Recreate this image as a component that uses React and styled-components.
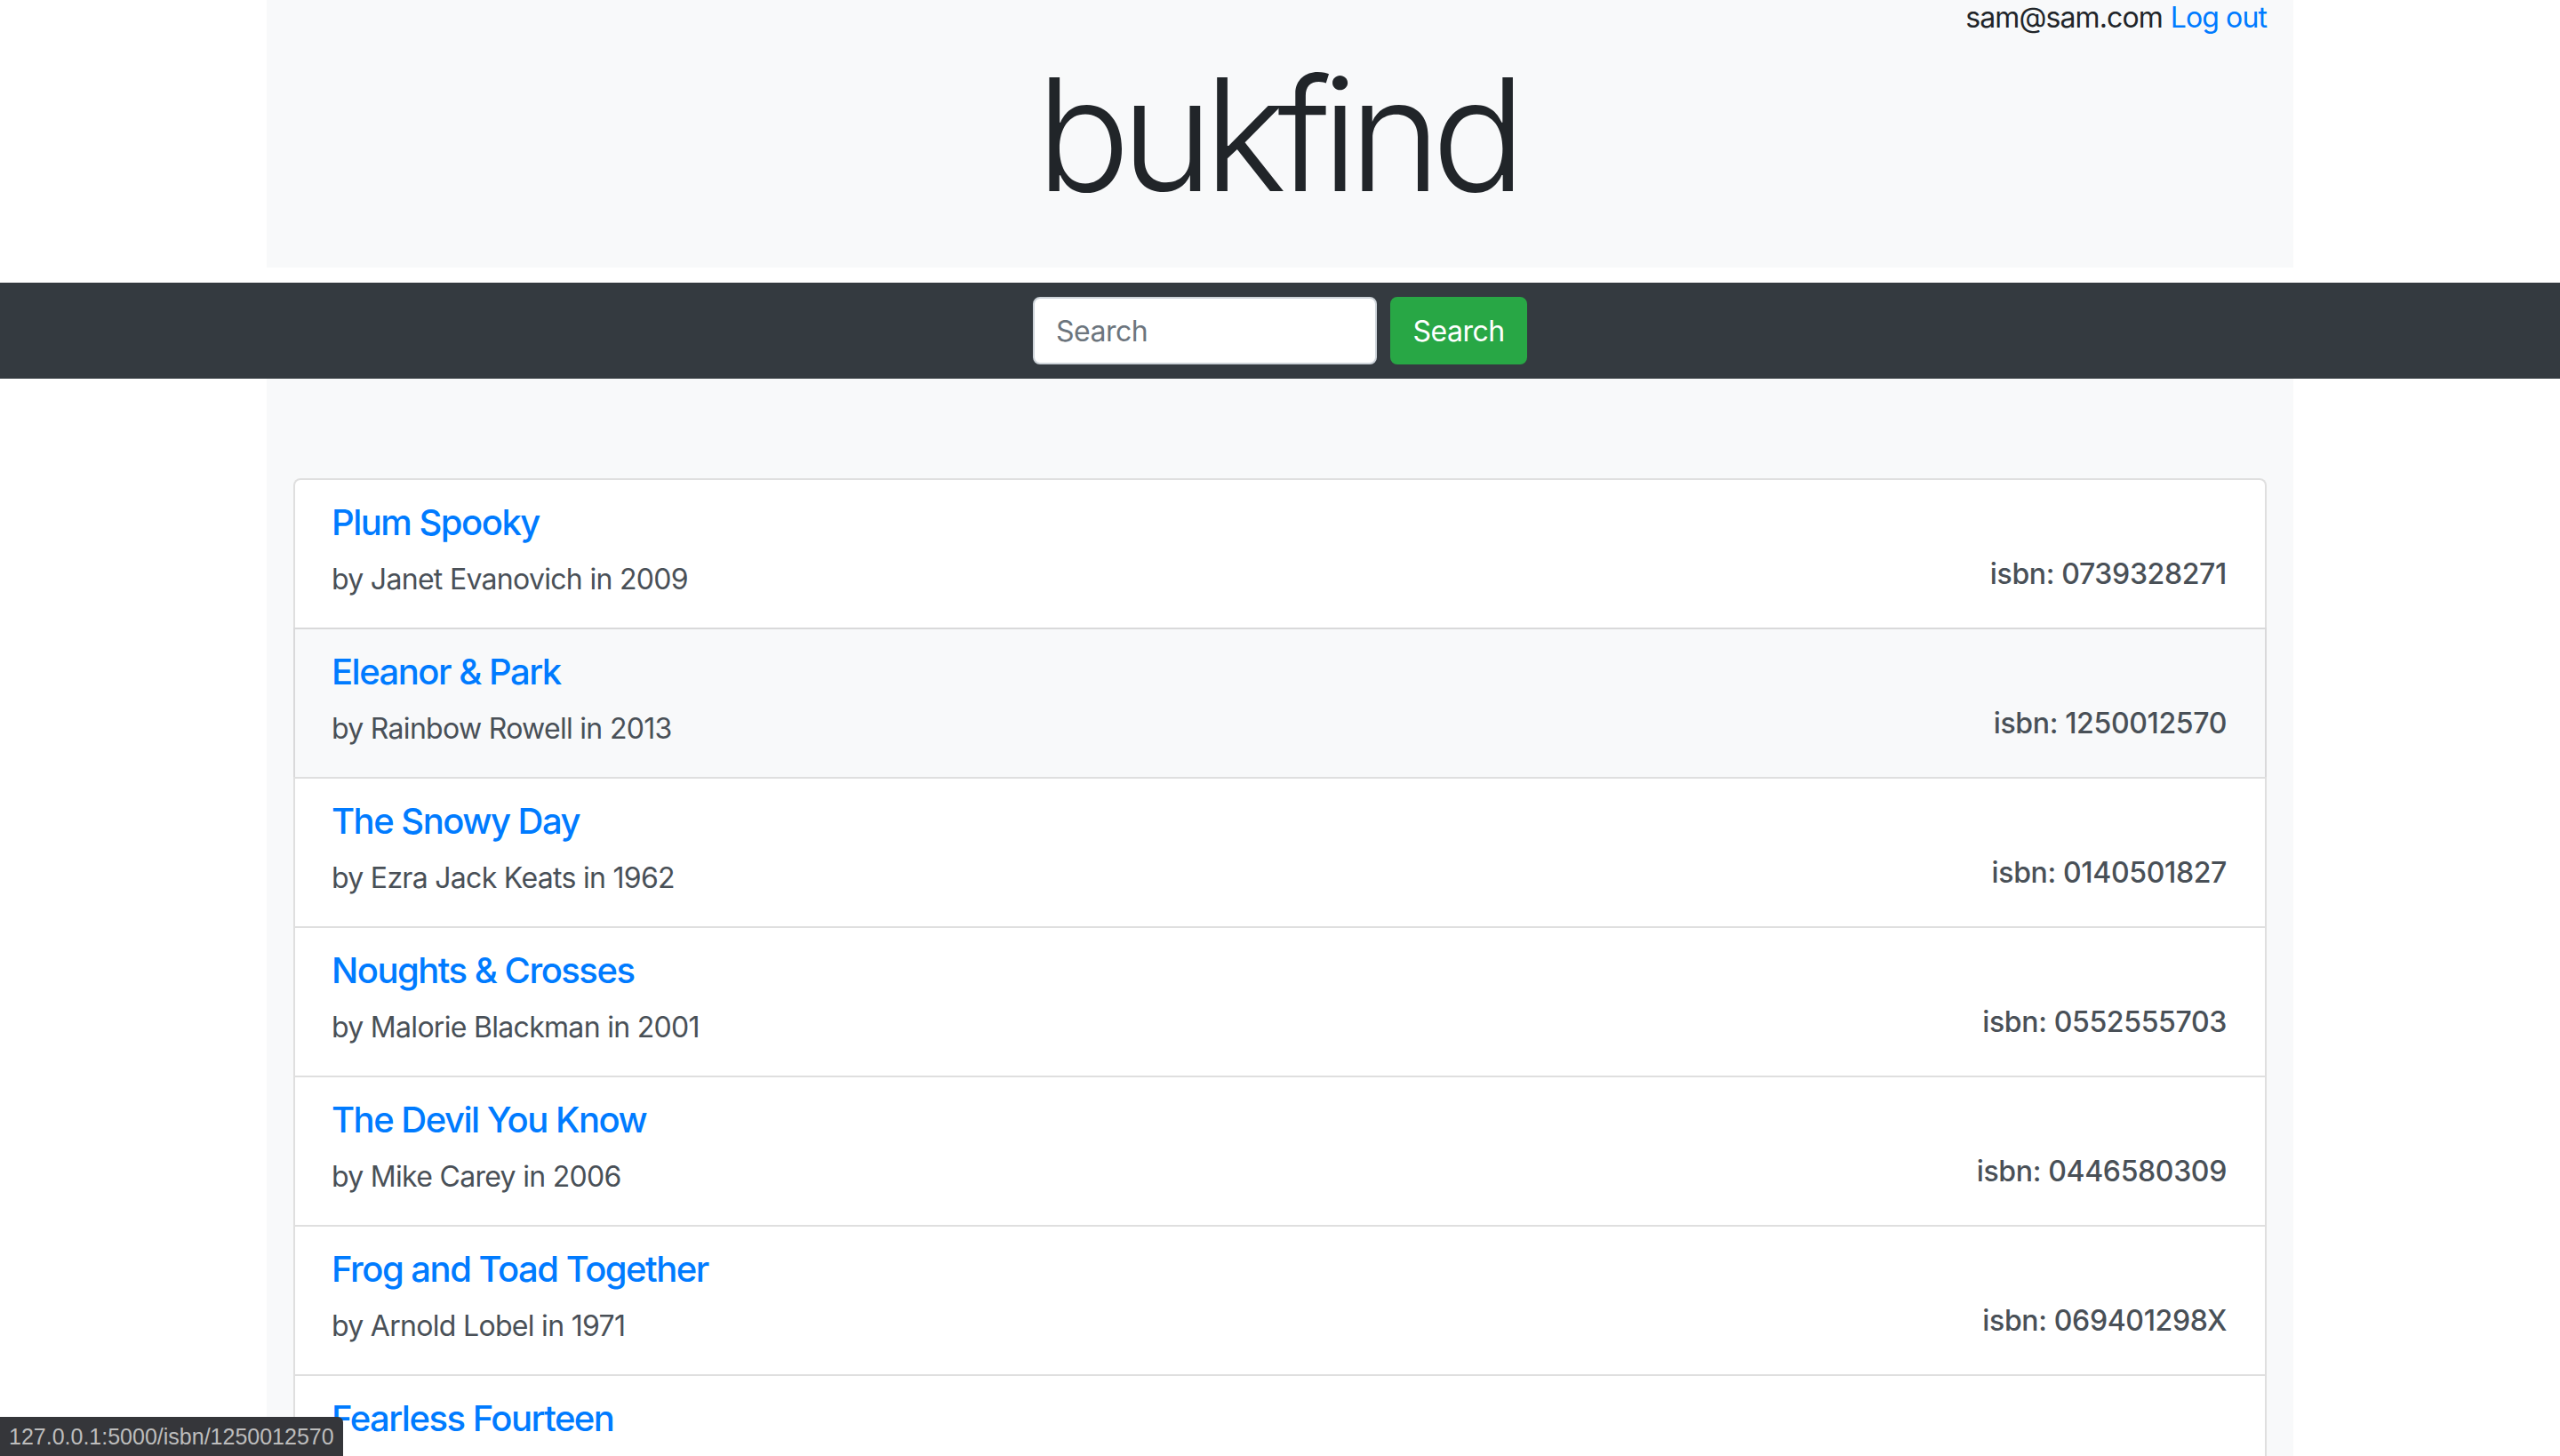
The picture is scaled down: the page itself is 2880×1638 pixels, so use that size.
import React from 'react';
import styled, { createGlobalStyle } from 'styled-components';

const GlobalStyle = createGlobalStyle`
  html, body { margin: 0; padding: 0; background: #fff; }
  body {
    font-family: Inter, "Noto Sans", sans-serif;
    color: #212529;
    font-size: 32px;
    line-height: 1.5;
  }
  *, *::before, *::after { box-sizing: border-box; }
`;

const HeaderBox = styled.header`
  width: 2280px;
  height: 301px;
  margin: 0 auto;
  padding: 0 30px;
  background: #f8f9fa;
  display: flex;
  flex-direction: column;
`;

const UserBar = styled.div`
  display: flex;
  justify-content: flex-end;
  gap: 9px;
  font-size: 32px;
  line-height: 40px;
  letter-spacing: -0.9px;
`;

const Email = styled.span`
  color: #212529;
`;

const Link = styled.a`
  color: #007bff;
  text-decoration: none;
`;

const Title = styled.h1`
  margin: 5px 0 0;
  padding-right: 8px;
  font-size: 176px;
  font-weight: 300;
  line-height: 211px;
  text-align: center;
  letter-spacing: -10.5px;
  color: #212529;
`;

const Navbar = styled.nav`
  margin-top: 17px;
  height: 108px;
  background: #343a40;
  display: flex;
  justify-content: center;
  align-items: center;
  gap: 15px;
`;

const SearchInput = styled.input`
  width: 387px;
  height: 76px;
  padding: 0 24px;
  font-family: inherit;
  font-size: 32px;
  letter-spacing: -0.5px;
  color: #495057;
  background: #fff;
  border: 2px solid #ced4da;
  border-radius: 8px;
  outline: none;
  &::placeholder { color: #6c757d; }
`;

const SearchButton = styled.button`
  width: 154px;
  height: 76px;
  font-family: inherit;
  font-size: 32px;
  letter-spacing: -0.5px;
  color: #fff;
  background: #28a745;
  border: 2px solid #28a745;
  border-radius: 8px;
  padding: 0;
`;

const Main = styled.main`
  width: 2280px;
  min-height: 1300px;
  margin: 0 auto;
  padding: 112px 30px 0;
  background: #f8f9fa;
`;

const List = styled.div`
  display: flex;
  flex-direction: column;
  border-radius: 8px;
  background: #fff;
`;

const Item = styled.a`
  display: flex;
  justify-content: space-between;
  align-items: flex-end;
  padding: 24px 43px 24px 41px;
  height: 170px;
  border: 2px solid rgba(0, 0, 0, 0.125);
  background: ${p => (p.$hovered ? '#f8f9fa' : '#fff')};
  text-decoration: none;
  & + & { margin-top: -2px; }
  &:first-child { border-top-left-radius: 8px; border-top-right-radius: 8px; }
`;

const Info = styled.div`
  display: flex;
  flex-direction: column;
`;

const BookTitle = styled.h5`
  margin: 0 0 16px;
  font-size: 40px;
  font-weight: 500;
  line-height: 48px;
  letter-spacing: -1.5px;
  color: #007bff;
`;

const Byline = styled.p`
  margin: 0 0 6px;
  font-size: 32px;
  line-height: 48px;
  letter-spacing: -0.7px;
  color: #495057;
`;

const Isbn = styled.h6`
  margin: 0 0 17px;
  font-size: 32px;
  font-weight: 500;
  line-height: 38px;
  letter-spacing: -0.35px;
  color: #495057;
`;

const StatusBar = styled.div`
  position: fixed;
  left: 0;
  bottom: 0;
  height: 44px;
  padding: 0 10px;
  background: #35363a;
  color: #bdbdbd;
  font-family: "Liberation Sans", Arial, sans-serif;
  font-size: 25px;
  line-height: 44px;
  border-top-right-radius: 6px;
`;

const books = [
  { title: 'Plum Spooky', author: 'Janet Evanovich', year: 2009, isbn: '0739328271' },
  { title: 'Eleanor & Park', author: 'Rainbow Rowell', year: 2013, isbn: '1250012570', hovered: true },
  { title: 'The Snowy Day', author: 'Ezra Jack Keats', year: 1962, isbn: '0140501827' },
  { title: 'Noughts & Crosses', author: 'Malorie Blackman', year: 2001, isbn: '0552555703' },
  { title: 'The Devil You Know', author: 'Mike Carey', year: 2006, isbn: '0446580309' },
  { title: 'Frog and Toad Together', author: 'Arnold Lobel', year: 1971, isbn: '069401298X' },
  { title: 'Fearless Fourteen', author: 'Janet Evanovich', year: 2008, isbn: '0312349513' },
];

export default function App() {
  return (
    <>
      <GlobalStyle />
      <HeaderBox>
        <UserBar>
          <Email>sam@sam.com</Email>
          <Link href="#">Log out</Link>
        </UserBar>
        <Title>bukfind</Title>
      </HeaderBox>
      <Navbar>
        <SearchInput placeholder="Search" />
        <SearchButton>Search</SearchButton>
      </Navbar>
      <Main>
        <List>
          {books.map(b => (
            <Item key={b.isbn} href="#" $hovered={b.hovered}>
              <Info>
                <BookTitle>{b.title}</BookTitle>
                <Byline>by {b.author} in {b.year}</Byline>
              </Info>
              <Isbn>isbn: {b.isbn}</Isbn>
            </Item>
          ))}
        </List>
      </Main>
      <StatusBar>127.0.0.1:5000/isbn/1250012570</StatusBar>
    </>
  );
}
